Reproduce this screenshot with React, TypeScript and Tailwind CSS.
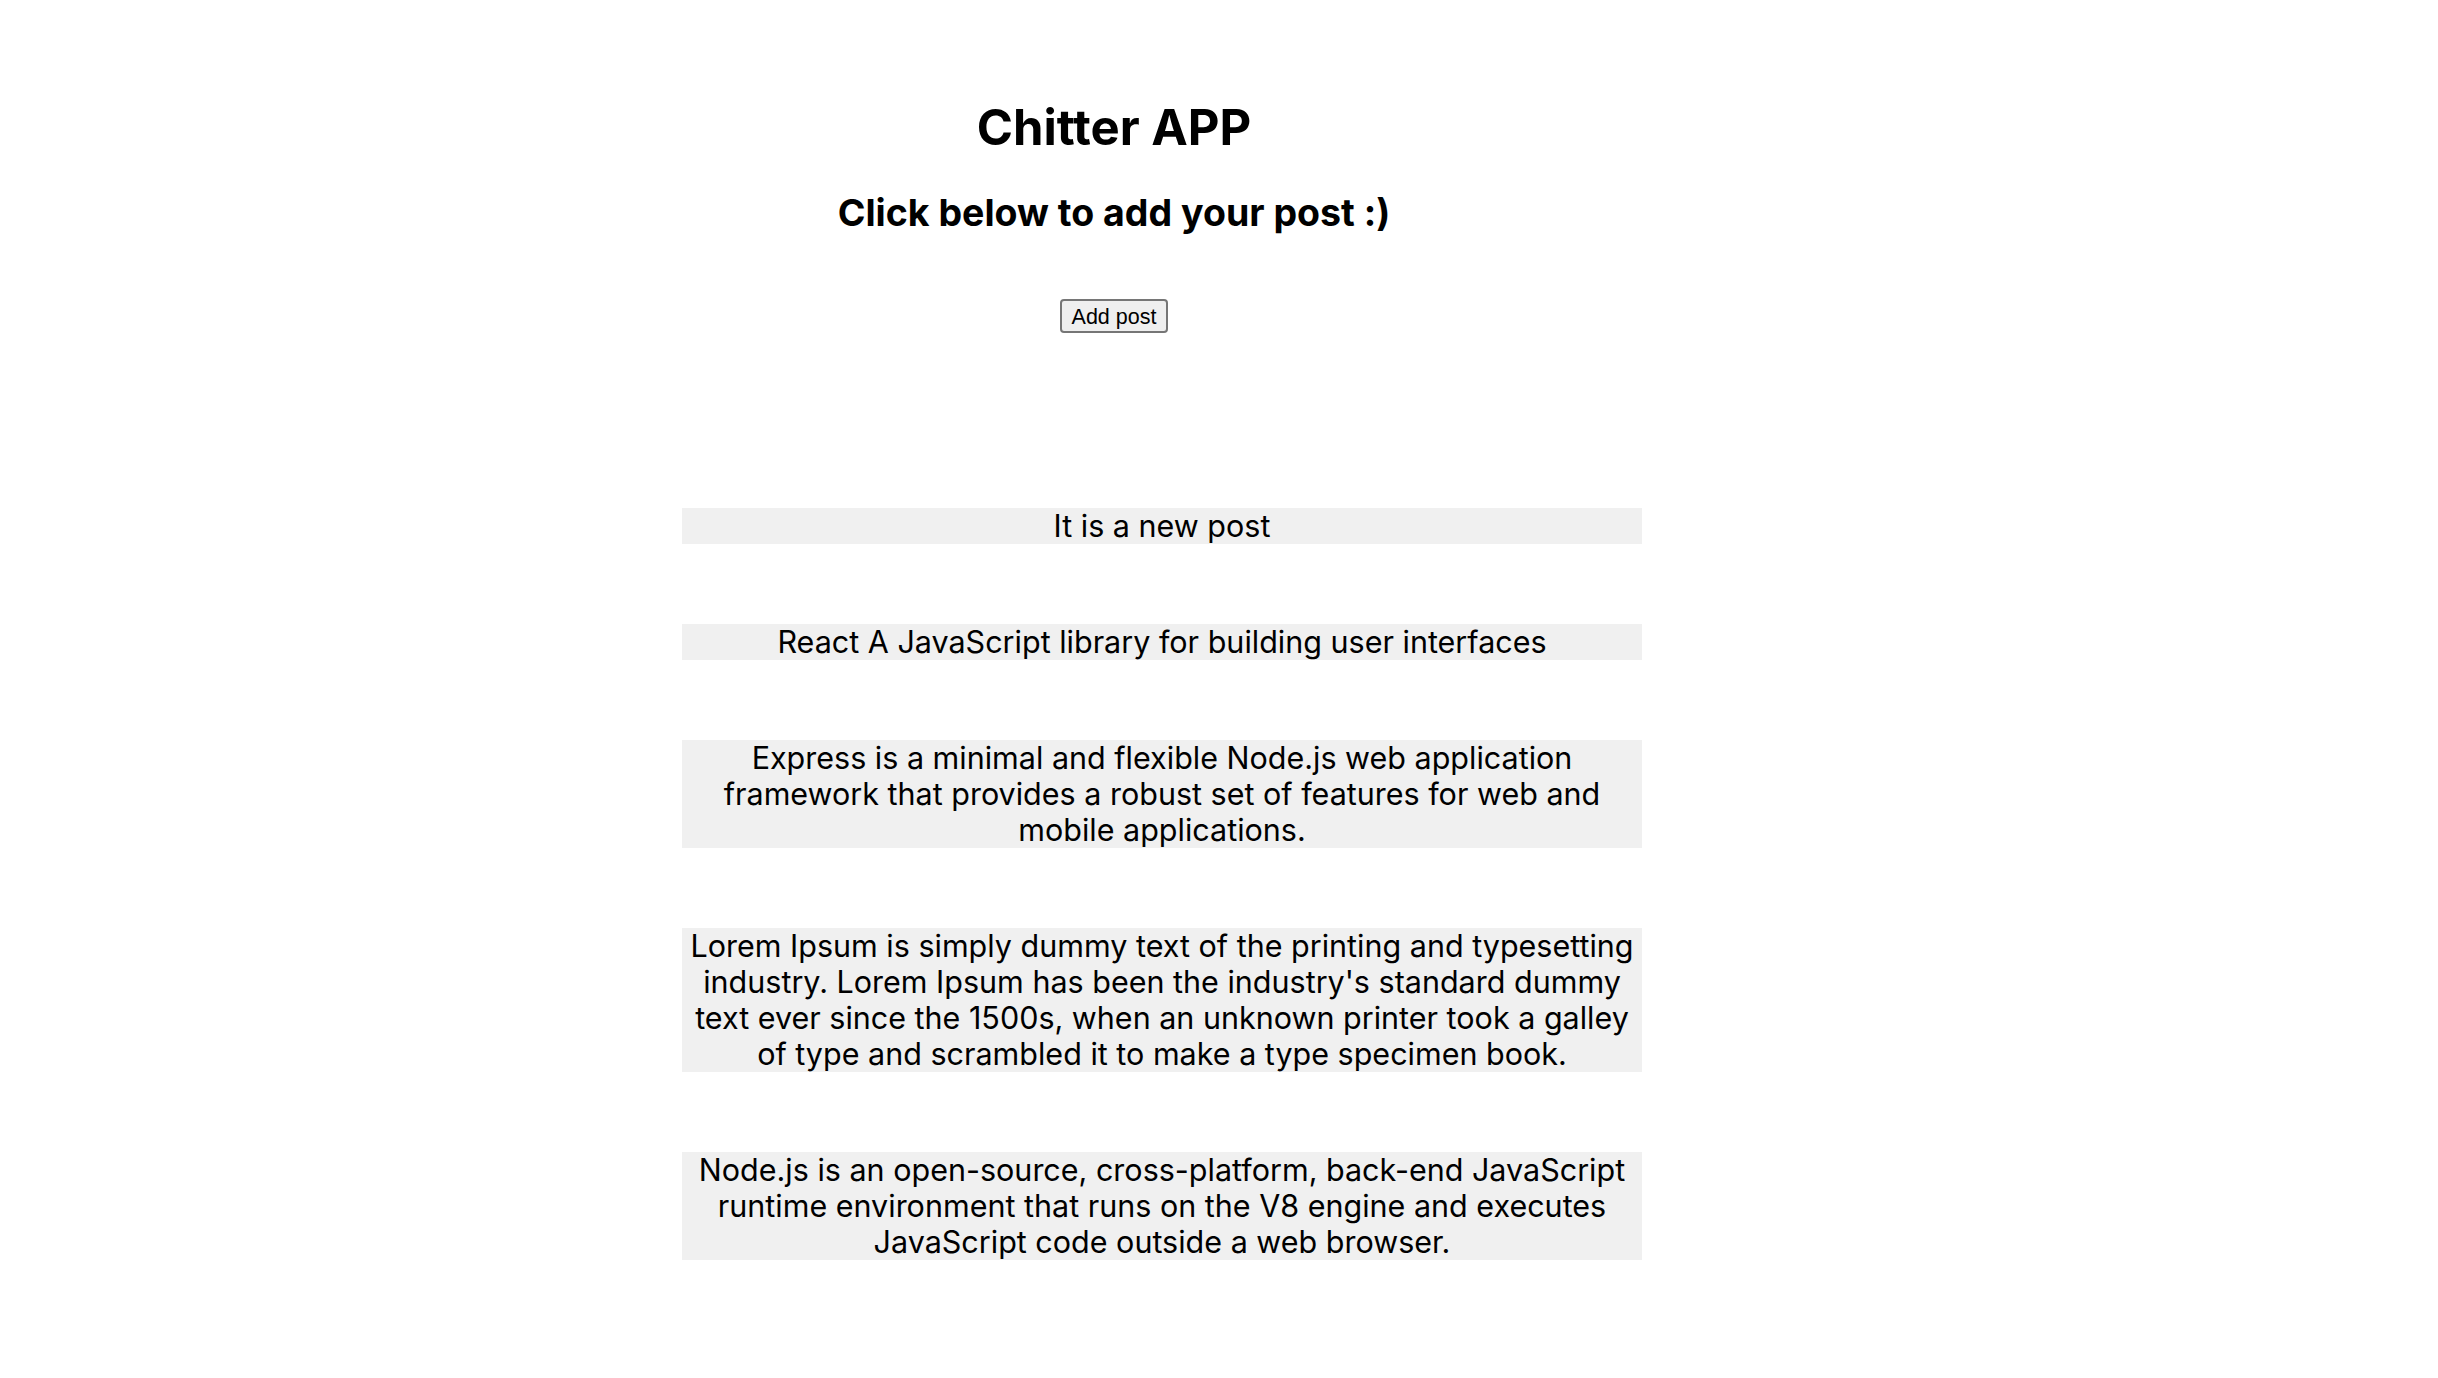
const posts = [
  'It is a new post',
  'React A JavaScript library for building user interfaces',
  'Express is a minimal and flexible Node.js web application framework that provides a robust set of features for web and mobile applications.',
  "Lorem Ipsum is simply dummy text of the printing and typesetting industry. Lorem Ipsum has been the industry's standard dummy text ever since the 1500s, when an unknown printer took a galley of type and scrambled it to make a type specimen book.",
  'Node.js is an open-source, cross-platform, back-end JavaScript runtime environment that runs on the V8 engine and executes JavaScript code outside a web browser.',
];

export default function App() {
  return (
    <div className="min-h-screen bg-white text-black font-['Inter',sans-serif]">
      <header className="w-[2228px] pt-[100px] flex flex-col items-center text-center">
        <h1 className="text-[49px] leading-[56px] font-bold">Chitter APP</h1>
        <h2 className="mt-[35px] text-[37.5px] leading-[44px] font-bold">
          Click below to add your post :)
        </h2>
        <button
          type="button"
          className="mt-[64px] h-[34px] w-[108px] pt-[3px] rounded-[4px] border-2 border-[#767676] bg-[#efefef] text-[21.5px] leading-none font-['Liberation_Sans',Arial,sans-serif]"
        >
          Add post
        </button>
      </header>

      <main className="ml-[682px] mt-[175px] w-[960px] flex flex-col gap-[80px] pb-[120px]">
        {posts.map((p) => (
          <p key={p} className="bg-[#f0f0f0] text-center text-[30.5px] leading-[36px] px-1">
            {p}
          </p>
        ))}
      </main>
    </div>
  );
}
